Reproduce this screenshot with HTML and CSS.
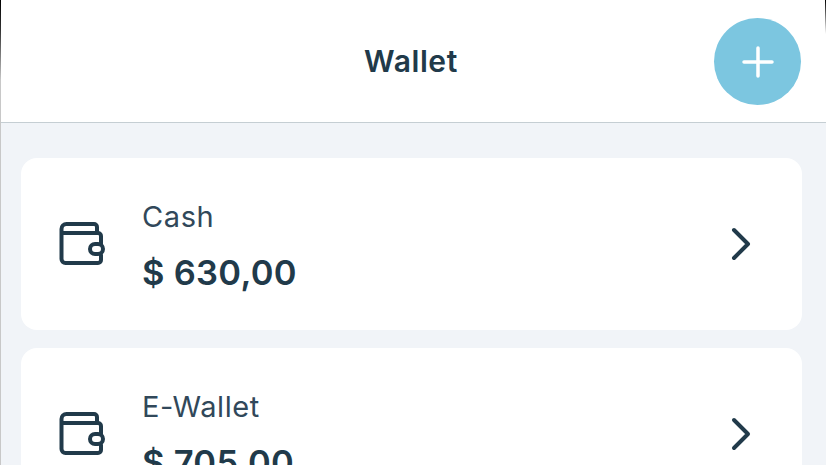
FILE: index.html
```html
<!DOCTYPE html>
<html lang="en">
<head>
  <meta charset="UTF-8">
  <meta name="viewport" content="width=device-width, initial-scale=1.0">
  <title>Wallet</title>
  <link rel="stylesheet" href="styles.css">
</head>
<body>

  <header class="top">
    <h1>Wallet</h1>
    <button class="add" aria-label="Add">
      <svg width="32" height="32" viewBox="0 0 32 32"><path d="M16 2v28M2 16h28"/></svg>
    </button>
  </header>

  <main class="list">
    <div class="card">
      <svg class="wallet" width="48" height="48" viewBox="0 0 48 48">
        <path d="M4.5 13V39a4 4 0 0 0 4 4H41a3 3 0 0 0 3-3V35M44 24V16a3 3 0 0 0-3-3H4.5M4.5 13V9a5 5 0 0 1 5-5H37a3 3 0 0 1 3 3V13"/>
        <rect x="33" y="24" width="13" height="10" rx="5"/>
      </svg>
      <div class="info">
        <span class="name">Cash</span>
        <strong class="amount">$ 630,00</strong>
      </div>
      <svg class="arrow" width="24" height="36" viewBox="0 0 24 36"><path d="M4 4l14 14L4 32"/></svg>
    </div>

    <div class="card">
      <svg class="wallet" width="48" height="48" viewBox="0 0 48 48">
        <path d="M4.5 13V39a4 4 0 0 0 4 4H41a3 3 0 0 0 3-3V35M44 24V16a3 3 0 0 0-3-3H4.5M4.5 13V9a5 5 0 0 1 5-5H37a3 3 0 0 1 3 3V13"/>
        <rect x="33" y="24" width="13" height="10" rx="5"/>
      </svg>
      <div class="info">
        <span class="name">E-Wallet</span>
        <strong class="amount">$ 705,00</strong>
      </div>
      <svg class="arrow" width="24" height="36" viewBox="0 0 24 36"><path d="M4 4l14 14L4 32"/></svg>
    </div>
  </main>

  <div class="edge edge-left"></div>
  <div class="edge edge-right"></div>

</body>
</html>
```

FILE: styles.css
```css
html,body{height:100%}
body{
  margin:0;width:826px;height:465px;overflow:hidden;position:relative;
  background:#f1f4f8;color:#213a4a;font-family:Inter,"Liberation Sans",sans-serif;
}
.top{
  height:122px;background:#fff;border-bottom:1px solid #c5ced3;padding-right:4px;
  display:flex;align-items:center;justify-content:center;position:relative;
}
.top h1{margin:0;font-size:30px;font-weight:600;letter-spacing:.6px;color:#213a4a}
.add{
  position:absolute;left:714px;top:18px;width:87px;height:87px;border:none;padding:0;
  border-radius:50%;background:#7cc6e0;display:flex;align-items:center;justify-content:center;
}
.add path{stroke:#fff;stroke-width:3.5;fill:none;stroke-linecap:round}

.list{display:flex;flex-direction:column;gap:18px;padding:35px 24px 0 21px}
.card{
  height:172px;flex:none;background:#fff;border-radius:16px;
  display:flex;align-items:center;padding:0 48px 0 36px;
}
.wallet{flex:none}
.wallet path,.wallet rect{fill:#fff;stroke:#213a4a;stroke-width:4;stroke-linejoin:round;stroke-linecap:round}
.wallet path{fill:none}
.info{flex:1;display:flex;flex-direction:column;margin-left:37px;padding-top:4px;gap:19px}
.name{font-size:29px;line-height:34px;font-weight:400;letter-spacing:.6px;color:#31485a}
.amount{font-size:34.5px;line-height:40px;font-weight:600;letter-spacing:.3px}
.arrow{flex:none}
.arrow path{fill:none;stroke:#213a4a;stroke-width:4;stroke-linecap:round;stroke-linejoin:round}

/* phone frame showing at the screenshot edges */
.edge{position:absolute;top:0;bottom:0;width:1px;background:linear-gradient(#000 0,#333 30px,#c8c8c8 80px)}
.edge-left{left:0}
.edge-right{right:0;bottom:auto;height:34px;background:linear-gradient(#000,#fff)}
```
